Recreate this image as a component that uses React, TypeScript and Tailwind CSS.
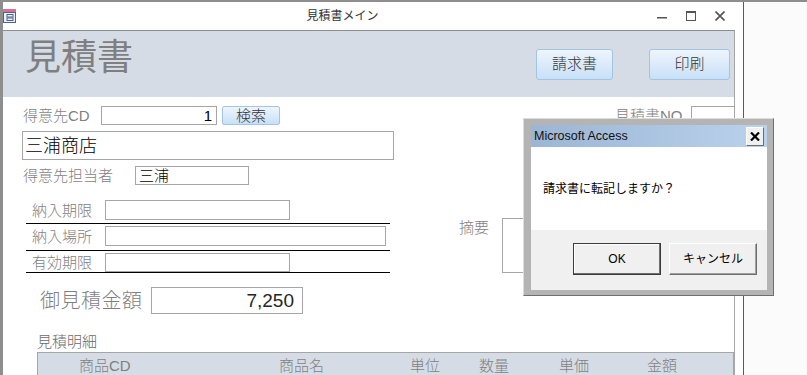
import React from 'react';

const headers = [
  { label: '商品CD', w: 'w-[241px] pl-[41px]' },
  { label: '商品名', w: 'w-[131px]' },
  { label: '単位', w: 'w-[69px]' },
  { label: '数量', w: 'w-[80px]' },
  { label: '単価', w: 'w-[88px]' },
  { label: '金額', w: 'w-[80px]' },
];

function WinIcon() {
  return (
    <svg width="13" height="14" viewBox="0 0 13 14" className="shrink-0">
      <rect x="0" y="0" width="13" height="3" fill="#d8708f" />
      <rect x="0.5" y="3.5" width="12" height="10" fill="#eef2f8" stroke="#4a6491" />
      <rect x="4" y="5.5" width="6" height="2.5" fill="none" stroke="#4a6491" strokeWidth="1" />
      <rect x="4" y="9" width="6" height="2.5" fill="none" stroke="#4a6491" strokeWidth="1" />
    </svg>
  );
}

export default function App() {
  return (
    <div className="relative h-[375px] w-[807px] overflow-hidden border-t-2 border-[#8e8e8e] bg-[#fbfbfb] font-['Liberation_Sans','Noto_Sans_CJK_JP',sans-serif] font-light">
      <div className="flex h-full w-[744px] flex-col border-l-[3px] border-r border-l-[#8e8e8e] border-r-[#a03c3c] bg-white">
        {/* Title bar */}
        <div className="flex h-[28px] shrink-0 items-center">
          <WinIcon />
          <div className="flex-1 pl-[12px] text-center text-[12px] font-normal leading-none text-[#333]">見積書メイン</div>
          <div className="flex items-center gap-[19px] pr-[18px] text-[#555]">
            <svg width="10" height="10" viewBox="0 0 10 10">
              <rect x="0" y="6" width="10" height="1.5" fill="#555" />
            </svg>
            <svg width="10" height="10" viewBox="0 0 10 10">
              <rect x="0.5" y="0.5" width="9" height="9" fill="none" stroke="#555" />
              <rect x="0" y="0" width="10" height="2" fill="#555" />
            </svg>
            <svg width="10" height="10" viewBox="0 0 10 10">
              <path d="M0.5 0.5L9.5 9.5M9.5 0.5L0.5 9.5" stroke="#555" strokeWidth="1.6" />
            </svg>
          </div>
        </div>

        {/* Form */}
        <div className="mr-[8px] flex flex-1 flex-col overflow-hidden border-r border-t border-r-[#a6a6a6] border-t-[#8e8e8e]">
          {/* Header */}
          <div className="flex h-[66px] shrink-0 items-start bg-[#d6dce5]">
            <div className="pl-[22px] pt-[9px] text-[36px] font-normal leading-none text-[#7f7f7f]">見積書</div>
            <button className="ml-auto mt-[18px] h-[31px] w-[77px] rounded-[3px] border border-[#a4c4e4] bg-gradient-to-b from-[#eef5fd] to-[#c8e0f8] text-[15px] text-[#333]">
              請求書
            </button>
            <button className="ml-[36px] mr-[4px] mt-[18px] h-[31px] w-[81px] rounded-[3px] border border-[#a4c4e4] bg-gradient-to-b from-[#eef5fd] to-[#c8e0f8] text-[15px] text-[#333]">
              印刷
            </button>
          </div>

          {/* Body */}
          <div className="flex flex-1 flex-col bg-white">
            <div className="flex">
              {/* Left column */}
              <div className="flex w-[397px] shrink-0 flex-col">
                <div className="ml-[20px] mt-[9px] flex h-[19px] items-center">
                  <span className="w-[78px] text-[15px] leading-none text-[#7f7f7f]">得意先CD</span>
                  <div className="flex h-[19px] w-[116px] items-center justify-end border border-[#a6a6a6] pr-[4px] text-[15px] leading-none text-black">
                    1
                  </div>
                  <button className="ml-[5px] h-[19px] w-[58px] rounded-[2px] border border-[#a4c4e4] bg-gradient-to-b from-[#eef5fd] to-[#c8e0f8] text-[15px] leading-none text-[#333]">
                    検索
                  </button>
                </div>

                <div className="ml-[19px] mt-[6px] flex h-[29px] w-[372px] items-center border border-[#a6a6a6] pl-[2px] text-[18px] leading-none text-black">
                  三浦商店
                </div>

                <div className="ml-[20px] mt-[6px] flex h-[19px] items-center">
                  <span className="w-[112px] text-[15px] leading-none text-[#7f7f7f]">得意先担当者</span>
                  <div className="flex h-[19px] w-[114px] items-center border border-[#a6a6a6] pl-[3px] text-[15px] leading-none text-black">
                    三浦
                  </div>
                </div>

                <div className="ml-[23px] mt-[13px] flex w-[364px] flex-col">
                  <div className="flex items-center border-b border-black pb-[3px] pt-[2px] pl-[6px]">
                    <span className="w-[73px] text-[15px] leading-none text-[#7f7f7f]">納入期限</span>
                    <div className="h-[20px] w-[185px] border border-[#a6a6a6]" />
                  </div>
                  <div className="flex items-center border-b border-black pb-[4px] pt-[2px] pl-[6px]">
                    <span className="w-[73px] text-[15px] leading-none text-[#7f7f7f]">納入場所</span>
                    <div className="h-[20px] w-[281px] border border-[#a6a6a6]" />
                  </div>
                  <div className="flex items-center border-b border-black pt-[2px] pl-[6px]">
                    <span className="w-[73px] text-[15px] leading-none text-[#7f7f7f]">有効期限</span>
                    <div className="h-[19px] w-[185px] border border-[#a6a6a6]" />
                  </div>
                </div>

                <div className="ml-[37px] mt-[14px] flex items-center">
                  <span className="w-[111px] text-[20px] leading-none tracking-[0.5px] text-[#7f7f7f]">御見積金額</span>
                  <div className="flex h-[27px] w-[152px] items-center justify-end border border-[#a6a6a6] pr-[8px] text-[19px] leading-none text-[#262626]">
                    7,250
                  </div>
                </div>
              </div>

              {/* Right column */}
              <div className="flex flex-1 flex-col">
                <div className="mt-[9px] flex h-[19px] items-center pl-[215px]">
                  <span className="w-[76px] shrink-0 text-[15px] leading-none text-[#7f7f7f]">見積書NO</span>
                  <div className="h-[19px] w-[60px] shrink-0 border border-[#a6a6a6]" />
                </div>
                <div className="mt-[93px] flex items-start pl-[59px]">
                  <span className="mt-[2px] w-[43px] shrink-0 text-[15px] leading-none text-[#7f7f7f]">摘要</span>
                  <div className="h-[55px] w-[220px] shrink-0 border border-[#a6a6a6]" />
                </div>
              </div>
            </div>

            <div className="ml-[34px] mt-[20px] text-[15px] leading-[16px] text-[#6b6b6b]">見積明細</div>
            <div className="ml-[34px] mt-[2px] flex h-[26px] items-center border border-[#a6a6a6] bg-[#d6dce5] text-[15px] leading-none text-[#7f7f7f]">
              {headers.map((h) => (
                <div key={h.label} className={h.w}>
                  {h.label}
                </div>
              ))}
            </div>
          </div>
        </div>
      </div>

      {/* Dialog */}
      <div className="absolute left-[523px] top-[116px] flex h-[178px] w-[251px] flex-col border border-b-[#6e6e6e] border-l-[#dcdcdc] border-r-[#6e6e6e] border-t-[#dcdcdc] bg-[#b4b4b4] pb-[5px] pl-[7px] pr-[6px] pt-[6px] font-normal">
        <div className="flex h-[22px] shrink-0 items-center bg-gradient-to-r from-[#9bb5d4] to-[#bad2ec] pl-[3px]">
          <span className="flex-1 text-[12.5px] leading-none text-[#111]">Microsoft Access</span>
          <button className="mr-[3px] flex h-[19px] w-[18px] items-center justify-center border border-b-[#6e6e6e] border-l-white border-r-[#6e6e6e] border-t-white bg-[#f0f0f0]">
            <svg width="10" height="9" viewBox="0 0 10 9">
              <path d="M1 0.5L9 8.5M9 0.5L1 8.5" stroke="#000" strokeWidth="2.2" />
            </svg>
          </button>
        </div>
        <div className="flex h-[83px] shrink-0 items-center bg-white pl-[12px] pt-[1px] text-[12px] leading-none text-black">
          請求書に転記しますか？
        </div>
        <div className="flex flex-1 items-start justify-end gap-[8px] bg-[#f0f0f0] pr-[10px] pt-[13px]">
          <button className="h-[32px] w-[88px] border border-[#3c3c3c] bg-[#f0f0f0] text-[12px] leading-none text-black shadow-[inset_-1px_-1px_0_#6e6e6e,inset_1px_1px_0_#fff]">
            OK
          </button>
          <button className="h-[32px] w-[88px] border border-b-[#6e6e6e] border-l-white border-r-[#6e6e6e] border-t-white bg-[#f0f0f0] text-[12px] leading-none text-black shadow-[inset_-1px_-1px_0_#a0a0a0]">
            キャンセル
          </button>
        </div>
      </div>
    </div>
  );
}
